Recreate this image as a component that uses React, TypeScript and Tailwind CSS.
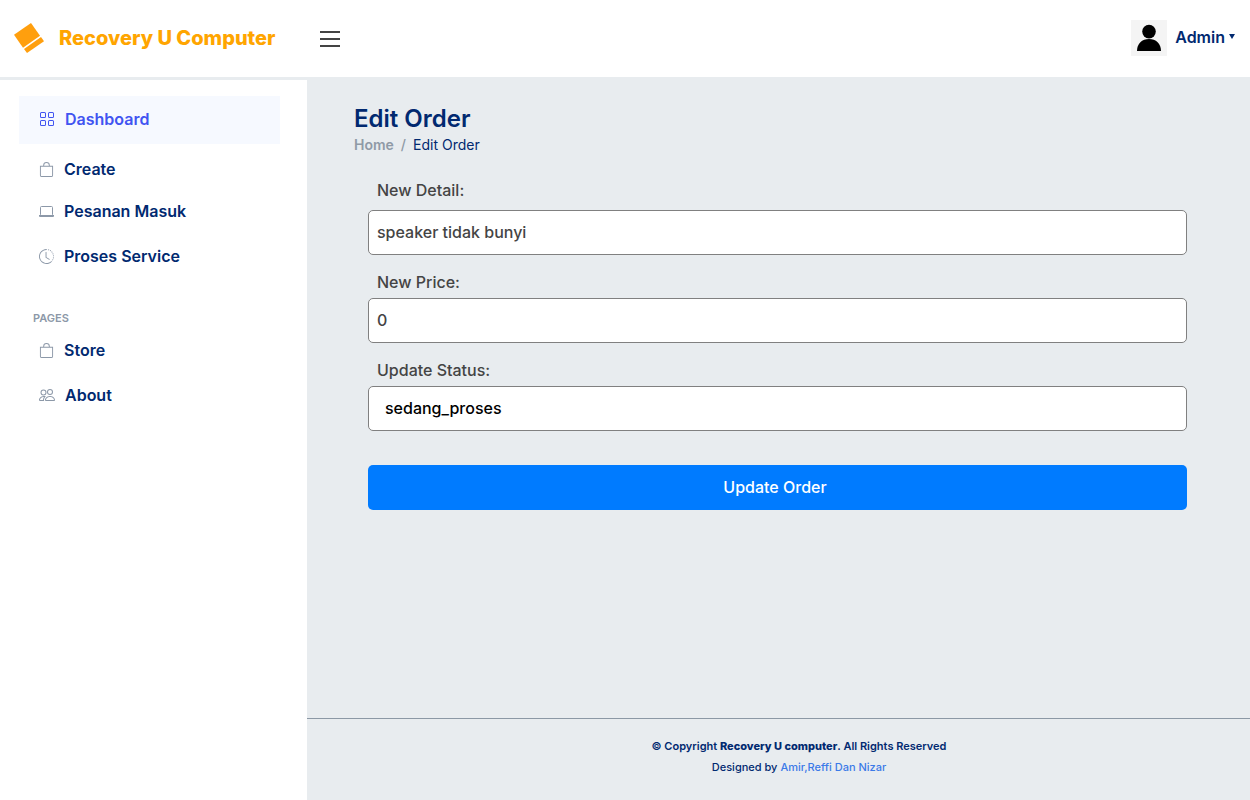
import type { ReactNode } from 'react';
import { BsBag, BsClockHistory, BsGrid, BsPeople } from 'react-icons/bs';

type NavItemProps = { icon: ReactNode; label: string; active?: boolean; className?: string };

function NavItem({ icon, label, active = false, className = '' }: NavItemProps) {
  const tone = active ? 'h-12 bg-[#f6f9ff] pb-[2px] text-[#4154f1]' : 'h-10 text-[#012970]';
  const iconTone = active ? 'text-[#4154f1]' : 'text-[#8c98a8]';
  return (
    <li className={className}>
      <a href="#" className={`flex items-center gap-[10px] pl-5 text-base font-semibold ${tone}`}>
        <span className={iconTone}>{icon}</span>
        {label}
      </a>
    </li>
  );
}

function Logo() {
  return (
    <svg width="30" height="30" viewBox="0 0 30 30" fill="#ff9f0e" aria-hidden="true">
      <path d="M0 11.8 17 0 26 12.8 9 24.8Z" />
      <path d="M10 26 27 14 30 18.2 13 30Z" />
    </svg>
  );
}

function LaptopIcon() {
  return (
    <svg width="15" height="15" viewBox="0 0 15 15" fill="none" aria-hidden="true">
      <rect x="1.5" y="2.5" width="12" height="9" rx="1" stroke="currentColor" />
      <path d="M0 11h15v1a1 1 0 0 1-1 1H1a1 1 0 0 1-1-1Z" fill="currentColor" />
    </svg>
  );
}

const fieldClass =
  'h-[45px] w-full appearance-none rounded-[5px] border border-[#808080] bg-white pb-[2px] text-base font-medium outline-none';
const labelClass = 'pl-[9px] text-base leading-6 font-medium';

export default function App() {
  return (
    <div className="flex min-h-screen flex-col bg-[#e8ecef] font-['Inter',sans-serif] text-[#444444]">
      <header className="mb-[3px] flex h-[77px] items-center bg-white pr-[15px] pl-[14px]">
        <a href="#" className="flex w-[306px] items-center gap-[15px] pb-[2px]">
          <Logo />
          <span className="text-xl font-extrabold text-[#ffa500]">Recovery U Computer</span>
        </a>
        <button type="button" aria-label="Toggle sidebar" className="flex w-5 flex-col gap-[5px]">
          <span className="h-[2px] w-full bg-[#444444]" />
          <span className="h-[2px] w-full bg-[#444444]" />
          <span className="h-[2px] w-full bg-[#444444]" />
        </button>
        <button type="button" className="ml-auto flex items-center gap-2 pb-[2px] text-[#012970]">
          <svg width="36" height="36" viewBox="0 0 36 36" aria-hidden="true">
            <path fill="#f4f4f4" d="M0 0h36v36H0z" />
            <circle cx="18" cy="11.6" r="6.8" />
            <path d="M6 31C6 23.5 11 19 18 19s12 4.500 12 12Z" />
          </svg>
          <span className="flex items-center gap-1 pb-[2px] text-base font-semibold">
            Admin
            <svg width="6" height="5" viewBox="0 0 6 5" fill="currentColor" aria-hidden="true">
              <path d="M0 0h6L3 5Z" />
            </svg>
          </span>
        </button>
      </header>

      <div className="flex grow">
        <aside className="w-[307px] shrink-0 bg-white pt-4 pr-[27px] pl-[19px]">
          <nav>
            <ul>
              <NavItem icon={<BsGrid size={16} />} label="Dashboard" active />
              <NavItem className="mt-[5px]" icon={<BsBag size={15} />} label="Create" />
              <NavItem className="mt-[2px]" icon={<LaptopIcon />} label="Pesanan Masuk" />
              <NavItem className="mt-[5px]" icon={<BsClockHistory size={15} />} label="Proses Service" />
            </ul>
            <h2 className="mt-[34px] mb-1 pl-[14px] text-[11px] leading-4 font-semibold text-[#8c98a8]">PAGES</h2>
            <ul>
              <NavItem icon={<BsBag size={15} />} label="Store" />
              <NavItem className="mt-[5px]" icon={<BsPeople size={16} />} label="About" />
            </ul>
          </nav>
        </aside>

        <div className="flex grow flex-col">
          <main className="grow pt-[23px] pr-[63px] pl-[47px]">
            <h1 className="text-2xl font-semibold text-[#012970]">Edit Order</h1>
            <nav aria-label="Breadcrumb" className="flex gap-[7px] text-sm leading-5">
              <a href="#" className="font-semibold text-[#8f9aa6]">Home</a>
              <span className="font-medium text-[#8f9aa6]">/</span>
              <span className="text-[#012970]">Edit Order</span>
            </nav>

            <form className="mt-[23px] flex flex-col gap-[15px] pl-[14px]">
              <div className="flex flex-col gap-2">
                <label htmlFor="detail" className={labelClass}>New Detail:</label>
                <input id="detail" type="text" defaultValue="speaker tidak bunyi" className={`${fieldClass} px-2`} />
              </div>
              <div className="flex flex-col gap-1">
                <label htmlFor="price" className={labelClass}>New Price:</label>
                <input id="price" type="text" defaultValue="0" className={`${fieldClass} px-2`} />
              </div>
              <div className="flex flex-col gap-1">
                <label htmlFor="status" className={labelClass}>Update Status:</label>
                <select id="status" className={`${fieldClass} px-4 text-black`}>
                  <option>sedang_proses</option>
                </select>
              </div>
              <button
                type="button"
                className="mt-[19px] h-[45px] rounded-[5px] bg-[#007bff] pr-[5px] pb-[2px] text-base font-medium text-white"
              >
                Update Order
              </button>
            </form>
          </main>

          <footer className="flex h-[82px] flex-col items-center gap-[5px] border-t border-[#8c98a5] pt-[19px] pl-[41px] text-[11px] leading-4 text-[#012970]">
            <p className="font-semibold">
              © Copyright <strong className="font-extrabold">Recovery U computer</strong>. All Rights Reserved
            </p>
            <p className="font-medium">
              Designed by <a href="#" className="text-[#3b7ae8]">Amir,Reffi Dan Nizar</a>
            </p>
          </footer>
        </div>
      </div>
    </div>
  );
}
